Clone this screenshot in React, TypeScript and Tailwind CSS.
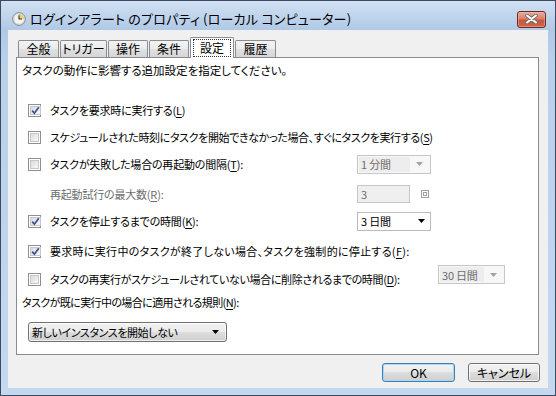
import type { ReactNode } from "react";

const btnFace =
  "bg-[linear-gradient(#f2f2f2,#ebebeb_50%,#dddddd_50%,#cfcfcf)]";

function Ul({ children }: { children: ReactNode }) {
  return <span className="underline underline-offset-[2px]">{children}</span>;
}

function Check({ checked }: { checked?: boolean }) {
  return (
    <span className="flex h-[13px] w-[13px] shrink-0 border border-[#8f8f8f] bg-white p-[1px]">
      <span className="flex flex-1 items-center justify-center border border-[#c6c9cc] bg-[linear-gradient(135deg,#d8dade,#f8f8f9)]">
        {checked && (
          <svg width="9" height="9" viewBox="0 0 9 9">
            <path
              d="M1.2 4.6 L3.4 7.2 L7.8 1.2"
              fill="none"
              stroke="#3a4f8f"
              strokeWidth="1.7"
            />
          </svg>
        )}
      </span>
    </span>
  );
}

function Arrow({ color }: { color: string }) {
  return (
    <svg width="7" height="4" viewBox="0 0 7 4">
      <path d="M0 0 H7 L3.5 4 Z" fill={color} />
    </svg>
  );
}

function DisabledCombo({ value, w }: { value: string; w: string }) {
  return (
    <div
      className={`flex h-[19px] ${w} shrink-0 items-center border border-[#c4c6c9] bg-[#f7f7f7] p-[1px] text-[#6d6d6d]`}
    >
      <span className="flex h-full flex-1 items-center bg-[#ededed] pl-[2px]">
        {value}
      </span>
      <span className="flex w-[19px] items-center justify-center">
        <Arrow color="#a3a3a3" />
      </span>
    </div>
  );
}

function Tab({ label, active, w }: { label: string; active?: boolean; w: string }) {
  if (active) {
    return (
      <div
        className={`relative z-10 -mb-[1px] flex h-[21px] ${w} flex-col rounded-t-[2px] border border-b-0 border-[#898c95] bg-white px-[2px] pt-[1px]`}
      >
        <span className="flex h-[18px] items-center justify-center border border-dotted border-[#333]">
          {label}
        </span>
      </div>
    );
  }
  return (
    <div
      className={`flex h-[17px] ${w} items-center justify-center rounded-t-[2px] border border-b-0 border-[#898c95] bg-[linear-gradient(#f3f3f3,#ebebeb_50%,#e1e1e1_50%,#d6d6d6)]`}
    >
      {label}
    </div>
  );
}

export default function App() {
  return (
    <div className="h-[396px] w-[556px] overflow-hidden whitespace-nowrap bg-[linear-gradient(#d2e1f2,#b0c9e6_30px,#b9d0eb_60px,#c4d9f0)] font-['Noto_Sans_CJK_JP',sans-serif] text-[12px] leading-[14px] text-black shadow-[inset_0_0_0_1px_#3b4c60] [font-feature-settings:'palt']">
      {/* title bar */}
      <div className="flex h-[30px] items-center pt-[8px]">
        <svg className="ml-[12px] shrink-0" width="14" height="14" viewBox="0 0 14 14">
          <circle cx="7" cy="7" r="6.3" fill="#f4f4f2" stroke="#7d7f83" />
          <path d="M7 7 L7 2 A5 5 0 0 1 12 7 Z" fill="#f0cf66" />
          <circle cx="7" cy="7" r="5" fill="none" stroke="#c9c9c9" strokeWidth="0.6" />
          <path d="M7 3.2 V7 H10" fill="none" stroke="#333" strokeWidth="1.1" />
        </svg>
        <span className="ml-[4px] text-[13px] leading-[18px] tracking-[0.2px]">
          ログインアラート のプロパティ (ローカル コンピューター)
        </span>
        <div className="ml-auto mr-[10px] flex h-[17px] w-[29px] items-center justify-center rounded-[3px] border border-[#6a2a20] bg-[linear-gradient(#e9ad9f,#d98069_45%,#c9553d_55%,#d0664c)] shadow-[inset_0_0_0_1px_#f0b8aa80]">
          <svg width="13" height="10" viewBox="0 0 13 10">
            <path d="M2 1.5 L11 8.5 M11 1.5 L2 8.5" stroke="#6b6b6b" strokeWidth="3.6" strokeLinecap="round" />
            <path d="M2 1.5 L11 8.5 M11 1.5 L2 8.5" stroke="#ffffff" strokeWidth="2" strokeLinecap="round" />
          </svg>
        </div>
      </div>

      {/* client area */}
      <div className="mx-[8px] flex h-[358px] flex-col bg-[#f0f0f0]">
        <div className="flex h-[27px] items-end gap-[1px] pl-[10px]">
          <Tab label="全般" w="w-[41px]" />
          <Tab label="トリガー" w="w-[47px]" />
          <Tab label="操作" w="w-[40px]" />
          <Tab label="条件" w="w-[40px]" />
          <Tab label="設定" w="w-[44px]" active />
          <Tab label="履歴" w="w-[41px]" />
        </div>

        <div className="ml-[8px] flex h-[298px] w-[523px] flex-col border border-[#898c95] bg-white pl-[5px] text-[11px] tracking-[-0.2px]">
          <div className="mt-[2px] flex h-[20px] items-center text-[11.5px] tracking-normal">
            タスクの動作に影響する追加設定を指定してください。
          </div>

          <div className="ml-[6px] mt-[20px] flex h-[20px] items-center gap-[9px]">
            <Check checked />
            <span>
              タスクを要求時に実行する(<Ul>L</Ul>)
            </span>
          </div>

          <div className="ml-[6px] mt-[7px] flex h-[20px] items-center gap-[9px]">
            <Check />
            <span className="tracking-[-0.38px]">
              スケジュールされた時刻にタスクを開始できなかった場合、すぐにタスクを実行する(<Ul>S</Ul>)
            </span>
          </div>

          <div className="ml-[6px] mt-[7px] flex h-[20px] items-center">
            <div className="flex w-[329px] items-center gap-[9px]">
              <Check />
              <span>
                タスクが失敗した場合の再起動の間隔(<Ul>T</Ul>):
              </span>
            </div>
            <DisabledCombo value="1 分間" w="w-[74px]" />
          </div>

          <div className="ml-[6px] mt-[10px] flex h-[20px] items-center">
            <div className="w-[329px] pl-[22px] text-[#6d6d6d]">
              再起動試行の最大数(<Ul>R</Ul>):
            </div>
            <div className="flex h-[18px] w-[53px] items-center border border-[#c4c6c9] bg-[#efefef] pl-[3px] text-[#6d6d6d]">
              3
            </div>
            <span className="ml-[11px] flex h-[8px] w-[8px] items-center justify-center border border-[#a0a0a0]">
              <span className="h-[4px] w-[4px] border border-[#a0a0a0]" />
            </span>
          </div>

          <div className="ml-[6px] mt-[7px] flex h-[20px] items-center">
            <div className="flex w-[329px] items-center gap-[9px]">
              <Check checked />
              <span>
                タスクを停止するまでの時間(<Ul>K</Ul>):
              </span>
            </div>
            <div className="flex h-[19px] w-[74px] items-center border border-[#b8bcc2] bg-white pl-[3px]">
              <span className="flex-1">3 日間</span>
              <span className="flex w-[18px] items-center justify-center">
                <Arrow color="#000" />
              </span>
            </div>
          </div>

          <div className="ml-[6px] mt-[10px] flex h-[20px] items-center gap-[9px]">
            <Check checked />
            <span className="tracking-[0.3px]">
              要求時に実行中のタスクが終了しない場合、タスクを強制的に停止する(<Ul>F</Ul>):
            </span>
          </div>

          <div className="ml-[6px] mt-[8px] flex h-[20px] items-center">
            <div className="flex w-[410px] items-center gap-[9px]">
              <Check />
              <span className="tracking-[-0.35px]">
                タスクの再実行がスケジュールされていない場合に削除されるまでの時間(<Ul>D</Ul>):
              </span>
            </div>
            <div className="mb-[9px]">
              <DisabledCombo value="30 日間" w="w-[67px]" />
            </div>
          </div>

          <div className="mt-[3px] flex h-[20px] items-center tracking-[-0.6px]">
            タスクが既に実行中の場合に適用される規則(<Ul>N</Ul>):
          </div>

          <div
            className={`ml-[6px] mt-[10px] flex h-[20px] w-[199px] items-center rounded-[3px] border border-[#707070] ${btnFace} pl-[3px] shadow-[inset_0_0_0_1px_#ffffffb0]`}
          >
            <span className="flex-1 tracking-[-0.4px]">新しいインスタンスを開始しない</span>
            <span className="mr-[5px] flex w-[12px] items-center justify-center">
              <Arrow color="#000" />
            </span>
          </div>
        </div>

        <div className="mr-[8px] mt-[8px] flex justify-end gap-[13px]">
          <button
            className={`flex h-[19px] w-[73px] items-center justify-center rounded-[3px] border border-[#3c7fb1] ${btnFace} shadow-[inset_0_0_0_1px_#a8d8f4]`}
          >
            OK
          </button>
          <button
            className={`flex h-[19px] w-[72px] items-center justify-center rounded-[3px] border border-[#707070] ${btnFace} shadow-[inset_0_0_0_1px_#ffffffb0]`}
          >
            キャンセル
          </button>
        </div>
      </div>
    </div>
  );
}
